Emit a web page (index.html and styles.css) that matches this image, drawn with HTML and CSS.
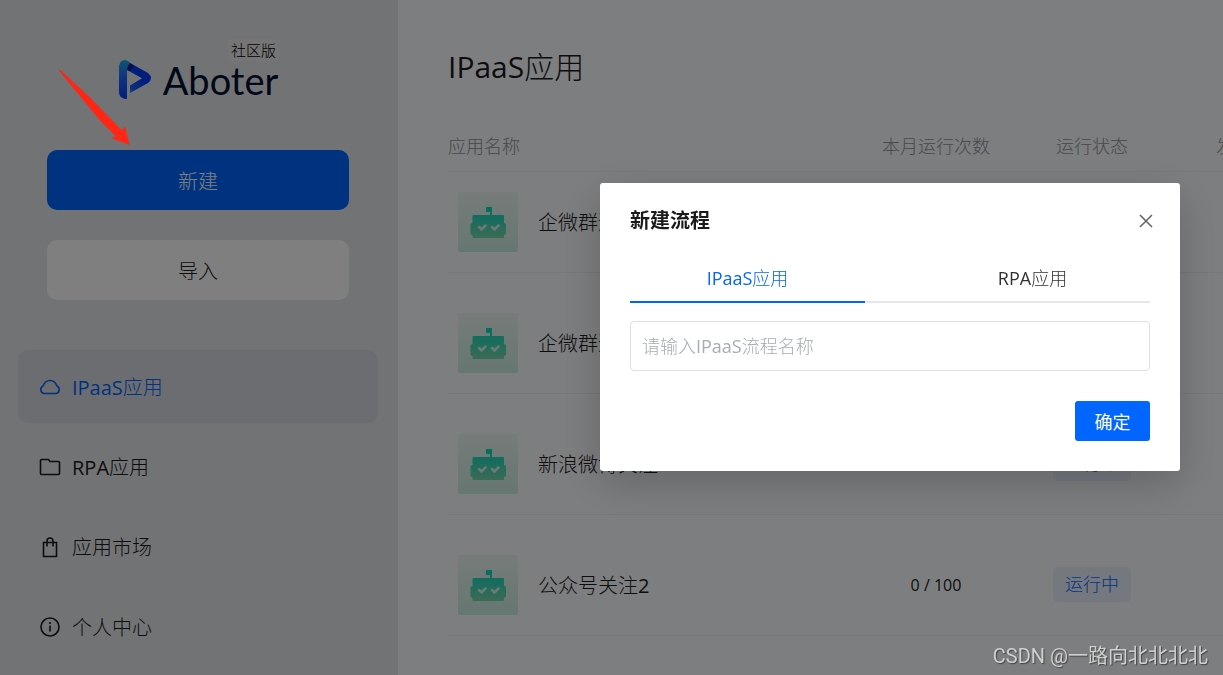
FILE: index.html
```html
<!DOCTYPE html>
<html lang="zh-CN">
<head>
    <meta charset="UTF-8">
    <meta name="viewport" content="width=device-width, initial-scale=1.0">
    <title>Aboter 社区版</title>
    <link rel="stylesheet" href="styles.css">
</head>
<body>
    <!-- shared icon shapes -->
    <svg class="defs" width="0" height="0" aria-hidden="true">
        <defs>
            <linearGradient id="tile" x1="0" y1="0" x2="0" y2="1">
                <stop offset="0" stop-color="#eef8f5"/>
                <stop offset="1" stop-color="#cdeee3"/>
            </linearGradient>
            <linearGradient id="bot" x1="0" y1="0" x2="0" y2="1">
                <stop offset="0" stop-color="#00dcc4"/>
                <stop offset="1" stop-color="#78d6ab"/>
            </linearGradient>
        </defs>
        <symbol id="robot" viewBox="0 0 60 60">
            <rect width="60" height="60" rx="2" fill="url(#tile)"/>
            <path d="M28 15h6v8h11q1 0 1 1v7q2 0 2 2v8q0 2-2 2v2q0 1-1 1H15.500q-1 0-1-1v-2q-2 0-2-2v-8q0-2 2-2v-7q0-1 1-1H32v-3h-4z" fill="url(#bot)"/>
            <path d="M21 35l2.500 2.500 4-4M34 35l2.500 2.500 4-4" fill="none" stroke="#d4f5ec" stroke-width="2.500" stroke-linecap="round"/>
        </symbol>
    </svg>

    <div class="page">
        <aside class="sidebar">
            <div class="brand">
                <svg class="logo" viewBox="0 0 34 40" aria-hidden="true">
                    <defs>
                        <linearGradient id="stem" x1="0" y1="0" x2="0" y2="1">
                            <stop offset="0" stop-color="#12b4dc"/>
                            <stop offset="0.300" stop-color="#2878ff"/>
                            <stop offset="1" stop-color="#0038f8"/>
                        </linearGradient>
                        <linearGradient id="wing" x1="0" y1="1" x2="0.600" y2="0.400">
                            <stop offset="0" stop-color="#12b4dc"/>
                            <stop offset="0.500" stop-color="#1a58ff"/>
                            <stop offset="1" stop-color="#0038f8"/>
                        </linearGradient>
                    </defs>
                    <path d="M3 2Q7-1 12 3L30 13Q36 18 30 23L12 33V25.500L24 18.300 9 10z" fill="url(#wing)"/>
                    <path d="M1 6Q2 0 7 0 10 0 12 3L9 8V39Q1 39 1 32z" fill="url(#stem)"/>
                    <path d="M12 3l4 3-4 5-3-1q0-4 3-7z" fill="#0a2096"/>
                </svg>
                <span class="brand-name">Aboter</span>
                <span class="edition">社区版</span>
            </div>

            <div class="actions">
                <button class="btn btn-create" type="button">新建</button>
                <button class="btn btn-import" type="button">导入</button>
            </div>

            <nav class="menu">
                <a class="menu-item active" href="#">
                    <svg viewBox="0 0 22 22"><path d="M5 17.500H17A4 4 0 0 0 18 10Q16 4.500 11 4.500T4 10A4 4 0 0 0 5 17.500Z"/></svg>
                    IPaaS应用
                </a>
                <a class="menu-item" href="#">
                    <svg viewBox="0 0 22 22"><path d="M1.500 4.500Q1.500 3.500 2.500 3.500H9.500L11 5.500H19.500Q20.500 5.500 20.500 6.500V17.500Q20.500 18.500 19.500 18.500H2.500Q1.500 18.500 1.500 17.500Z"/></svg>
                    RPA应用
                </a>
                <a class="menu-item" href="#">
                    <svg viewBox="0 0 22 22"><path d="M4.500 6.500H17.500V20.500H4.500ZM8 10.500V5Q8 2 11 2T14 5V10.500"/></svg>
                    应用市场
                </a>
                <a class="menu-item" href="#">
                    <svg viewBox="0 0 22 22"><circle cx="11" cy="11" r="9"/><path d="M11 9.500V15.500M11 6V8"/></svg>
                    个人中心
                </a>
            </nav>
        </aside>

        <main class="content">
            <h1>IPaaS应用</h1>
            <table class="app-table">
                <colgroup>
                    <col>
                    <col class="col-count">
                    <col class="col-status">
                    <col class="col-publish">
                </colgroup>
                <thead>
                    <tr>
                        <th class="name">应用名称</th>
                        <th>本月运行次数</th>
                        <th>运行状态</th>
                        <th>发布状态</th>
                    </tr>
                </thead>
                <tbody>
                    <tr>
                        <td class="name"><div class="app"><svg class="app-icon"><use href="#robot"/></svg>企微群通知</div></td>
                        <td>0 / 100</td>
                        <td><span class="tag">运行中</span></td>
                        <td></td>
                    </tr>
                    <tr>
                        <td class="name"><div class="app"><svg class="app-icon"><use href="#robot"/></svg>企微群通知</div></td>
                        <td>0 / 100</td>
                        <td><span class="tag">运行中</span></td>
                        <td></td>
                    </tr>
                    <tr>
                        <td class="name"><div class="app"><svg class="app-icon"><use href="#robot"/></svg>新浪微博关注</div></td>
                        <td>0 / 100</td>
                        <td><span class="tag">运行中</span></td>
                        <td></td>
                    </tr>
                    <tr>
                        <td class="name"><div class="app"><svg class="app-icon"><use href="#robot"/></svg>公众号关注2</div></td>
                        <td>0 / 100</td>
                        <td><span class="tag">运行中</span></td>
                        <td></td>
                    </tr>
                </tbody>
            </table>
        </main>
    </div>

    <div class="overlay">
        <div class="dialog" role="dialog" aria-labelledby="dialog-title">
            <div class="dialog-header">
                <h2 id="dialog-title">新建流程</h2>
                <button class="close" type="button" aria-label="关闭">
                    <svg viewBox="0 0 14 14"><path d="M1 1L13 13M13 1L1 13"/></svg>
                </button>
            </div>
            <div class="tabs" role="tablist">
                <button class="tab active" type="button" role="tab" aria-selected="true">IPaaS应用</button>
                <button class="tab" type="button" role="tab" aria-selected="false">RPA应用</button>
            </div>
            <input class="flow-name" type="text" placeholder="请输入IPaaS流程名称" aria-label="流程名称">
            <div class="dialog-footer">
                <button class="confirm" type="button">确定</button>
            </div>
        </div>
    </div>

    <!-- arrow pointing at the create button -->
    <svg class="arrow" viewBox="0 0 72 76" aria-hidden="true">
        <path d="M1 1.500Q1 0.500 2.500 1L32 28.500 50 47 64 61.500 67 57 71.500 76 53 69 58 67.500 42 51.500 28 34.500Z"/>
    </svg>
    <div class="watermark">CSDN @一路向北北北北</div>
</body>
</html>
```
FILE: styles.css
```css
* {
    box-sizing: border-box;
}
body {
    margin: 0;
    font-family: "Open Sans", "Noto Sans CJK SC Light", "Noto Sans CJK SC", sans-serif;
    font-size: 20px;
    font-weight: 400;
    color: #1a1a1a;
    overflow: hidden;
}
button, input {
    font-family: inherit;
    font-weight: inherit;
}
h1, h2 {
    margin: 0;
}
.defs {
    position: absolute;
}
.page {
    display: flex;
    height: 100vh;
}

/* sidebar */
.sidebar {
    flex: none;
    width: 398px;
    padding: 50px 20px 0 18px;
    background-color: #e4e7eb;
}
.brand {
    position: relative;
    display: flex;
    align-items: center;
    justify-content: center;
    gap: 11px;
    width: 162px;
    height: 60px;
    margin: 0 auto;
}
.logo {
    flex: none;
    width: 34px;
    height: 40px;
}
.brand-name {
    font-family: Lato, sans-serif;
    font-size: 38px;
    line-height: 40px;
    color: #001030;
}
.edition {
    position: absolute;
    top: -11px;
    right: 0;
    padding: 0 3px;
    border-radius: 3px;
    background-color: #ebebeb;
    font-size: 15px;
    line-height: 22px;
    color: #000;
}
.actions {
    display: flex;
    flex-direction: column;
    gap: 30px;
    padding: 40px 29px 50px;
}
.btn {
    height: 60px;
    border: none;
    border-radius: 10px;
    font-size: 20px;
    cursor: pointer;
}
.btn-create {
    background-color: #0066ff;
    color: #fff;
}
.btn-import {
    background-color: #fff;
    color: #1a1a1a;
}
.menu {
    display: flex;
    flex-direction: column;
    gap: 7px;
}
.menu-item {
    display: flex;
    align-items: center;
    gap: 11px;
    height: 73px;
    padding: 0 21px;
    border-radius: 10px;
    color: #1a1a1a;
    text-decoration: none;
}
.menu-item svg {
    width: 22px;
    height: 22px;
    fill: none;
    stroke: currentColor;
    stroke-width: 1.6;
}
.menu-item.active {
    background-color: #d7dae2;
    color: #0066ff;
}

/* application list */
.content {
    flex: 1;
    min-width: 0;
    padding: 44px 0 0 50px;
    background-color: #fafcff;
    overflow: hidden;
}
h1 {
    font-size: 30px;
    font-weight: 400;
    line-height: 45px;
}
.app-table {
    width: 100%;
    min-width: 886px;
    margin-top: 31px;
    border-collapse: collapse;
    table-layout: fixed;
}
.col-count, .col-status {
    width: 156px;
}
.col-publish {
    width: 164px;
}
th {
    height: 51px;
    padding: 0;
    border-bottom: 1px solid #eef0f4;
    font-size: 18px;
    font-weight: 400;
    color: #909399;
}
td {
    padding: 40px 0 20px;
    border-bottom: 1px solid #eef0f4;
    font-size: 16px;
    text-align: center;
}
tbody tr:first-child td {
    padding-top: 20px;
}
.name {
    text-align: left;
}
.app {
    display: flex;
    align-items: center;
    gap: 20px;
    padding-left: 10px;
    font-size: 20px;
}
.app-icon {
    width: 60px;
    height: 60px;
}
.tag {
    display: inline-block;
    padding: 0 12px;
    border-radius: 5px;
    background-color: #ebf1ff;
    font-size: 18px;
    line-height: 35px;
    color: #0066ff;
}

/* dialog */
.overlay {
    position: fixed;
    inset: 0;
    display: flex;
    align-items: flex-start;
    justify-content: flex-end;
    padding: 183px 43px;
    background-color: rgba(0, 0, 0, 0.5);
}
.dialog {
    width: 580px;
    padding: 20px 30px 30px;
    border-radius: 3px;
    background-color: #fff;
    box-shadow: 0 12px 40px rgba(0, 0, 0, 0.2);
}
.dialog-header {
    display: flex;
    align-items: center;
    justify-content: space-between;
    height: 36px;
}
h2 {
    font-family: "Open Sans", "Noto Sans CJK SC", sans-serif;
    font-size: 20px;
    font-weight: 700;
    line-height: 36px;
}
.close {
    display: flex;
    padding: 3px;
    margin-right: -6px;
    border: none;
    background: none;
    cursor: pointer;
}
.close svg {
    width: 14px;
    height: 14px;
    stroke: #606266;
    stroke-width: 1.5;
}
.tabs {
    display: flex;
    gap: 50px;
    margin-top: 14px;
    box-shadow: inset 0 -2px #e4e7ed;
}
.tab {
    flex: 1;
    height: 50px;
    padding: 0 0 2px;
    border: none;
    background: none;
    font-size: 18px;
    color: #303133;
    cursor: pointer;
}
.tab.active {
    box-shadow: inset 0 -2px #0066ff;
    color: #0066ff;
}
.flow-name {
    width: 100%;
    height: 50px;
    margin-top: 18px;
    padding: 0 11px;
    border: 1px solid #dcdfe6;
    border-radius: 4px;
    font-size: 18px;
    outline: none;
}
.flow-name::placeholder {
    color: #a8abb2;
}
.dialog-footer {
    display: flex;
    justify-content: flex-end;
    margin-top: 30px;
}
.confirm {
    width: 75px;
    height: 40px;
    padding: 0;
    border: none;
    border-radius: 3px;
    background-color: #0066ff;
    font-family: "Noto Sans CJK SC", sans-serif;
    font-size: 18px;
    color: #fff;
    cursor: pointer;
}

.arrow {
    position: absolute;
    top: 69px;
    left: 58px;
    width: 72px;
    height: 76px;
    fill: #ff2613;
}
.watermark {
    position: fixed;
    right: 15px;
    bottom: 4px;
    font-family: Roboto, "Noto Sans CJK SC", sans-serif;
    font-size: 20px;
    line-height: 30px;
    color: #d0d0d0;
    text-shadow: 1px 1px 1px #444;
}
```
